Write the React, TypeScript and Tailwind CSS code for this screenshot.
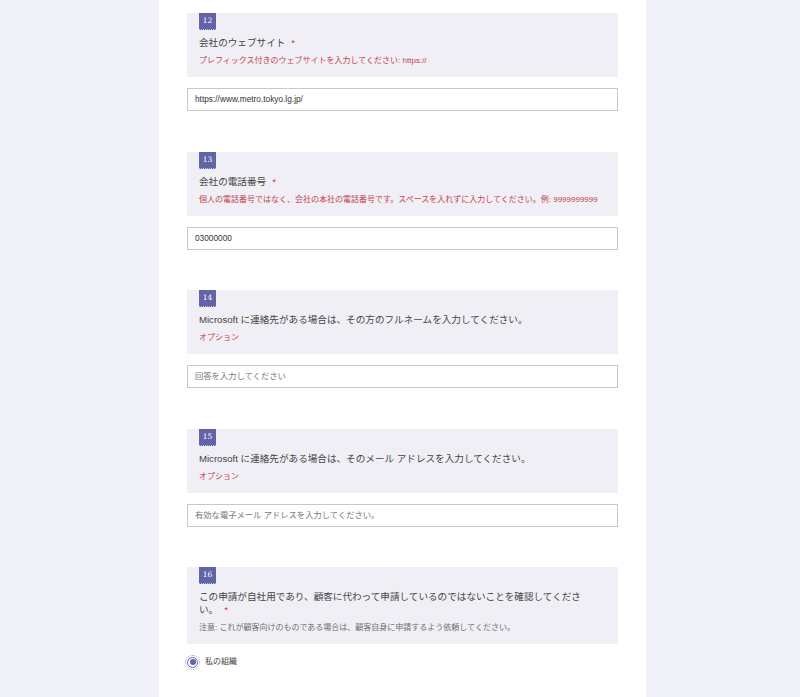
import React from 'react';

type Question = {
  no: number;
  title: string;
  required?: boolean;
  note: string;
  noteTone: 'red' | 'gray';
  value?: string;
  placeholder?: string;
};

const questions: Question[] = [
  {
    no: 12,
    title: '会社のウェブサイト',
    required: true,
    note: 'プレフィックス付きのウェブサイトを入力してください: https://',
    noteTone: 'red',
    value: 'https://www.metro.tokyo.lg.jp/',
  },
  {
    no: 13,
    title: '会社の電話番号',
    required: true,
    note: '個人の電話番号ではなく、会社の本社の電話番号です。スペースを入れずに入力してください。例: 9999999999',
    noteTone: 'red',
    value: '03000000',
  },
  {
    no: 14,
    title: 'Microsoft に連絡先がある場合は、その方のフルネームを入力してください。',
    note: 'オプション',
    noteTone: 'red',
    placeholder: '回答を入力してください',
  },
  {
    no: 15,
    title: 'Microsoft に連絡先がある場合は、そのメール アドレスを入力してください。',
    note: 'オプション',
    noteTone: 'red',
    placeholder: '有効な電子メール アドレスを入力してください。',
  },
];

const font = "font-['Liberation_Sans','Noto_Sans_CJK_JP',sans-serif]";

const QuestionHeader: React.FC<{ q: Question }> = ({ q }) => (
  <div className="bg-[#f0eff5] px-[12px] pb-[11px]">
    <div className="flex h-[17px] w-[17px] items-center justify-center border-b border-dotted border-[#b9b9d9] bg-[#6264a7] font-['DejaVu_Serif',serif] text-[7.5px] text-white">
      {q.no}
    </div>
    <div className="mt-[6px] max-w-[390px] text-[9.6px] leading-[13px] text-[#444]">
      {q.title}
      {q.required && <span className="ml-[6px] text-[#c4314b]">*</span>}
    </div>
    <div
      className={`mt-[7px] text-[8px] leading-[10px] ${
        q.noteTone === 'red' ? 'text-[#c4414b]' : 'text-[#707070]'
      }`}
    >
      {q.note}
    </div>
  </div>
);

export default function App() {
  return (
    <div className={`min-h-screen bg-[#f1f1f9] ${font}`}>
      <div className="ml-[159px] min-h-[697px] w-[487px] bg-white px-[28px] pt-[13px]">
        {questions.map((q) => (
          <div key={q.no} className="mb-[40.5px]">
            <QuestionHeader q={q} />
            <div className="mt-[11px] flex h-[23px] items-center border border-[#c8c8c8] bg-white px-[7px] text-[8.3px]">
              {q.value ? (
                <span className="text-[#333]">{q.value}</span>
              ) : (
                <span className="text-[#777]">{q.placeholder}</span>
              )}
            </div>
          </div>
        ))}

        <QuestionHeader
          q={{
            no: 16,
            title: 'この申請が自社用であり、顧客に代わって申請しているのではないことを確認してください。',
            required: true,
            note: '注意: これが顧客向けのものである場合は、顧客自身に申請するよう依頼してください。',
            noteTone: 'gray',
          }}
        />
        <label className="mt-[12px] flex items-center gap-[7px] text-[8px] text-[#444]">
          <span className="flex h-[11px] w-[11px] items-center justify-center rounded-full border border-[#6264a7] bg-white outline outline-1 outline-dotted outline-offset-[1px] outline-[#9a9ac8]">
            <span className="h-[6px] w-[6px] rounded-full bg-[#6264a7]" />
          </span>
          私の組織
        </label>
      </div>
    </div>
  );
}
